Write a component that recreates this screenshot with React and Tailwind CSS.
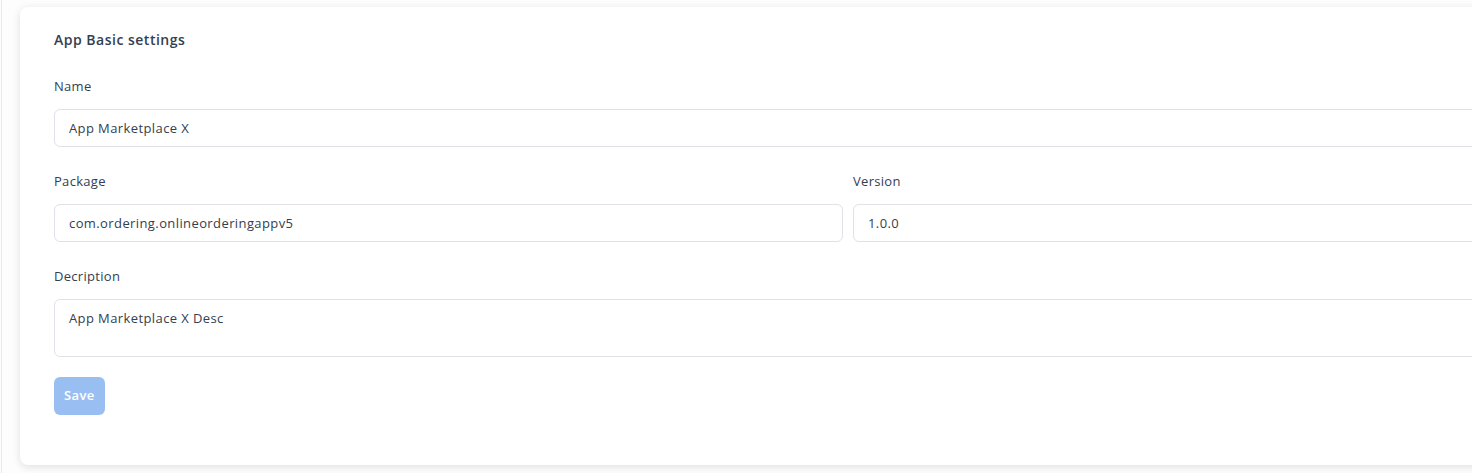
const fieldClass =
  'w-full h-[38px] rounded-md border border-[#e1e1e8] bg-white px-[14px] text-[13px] tracking-[0.4px] text-[#344050] outline-none'

function Field({ label, value }) {
  return (
    <div className="flex flex-col">
      <label className="text-[13px] tracking-[0.3px] text-[#344050] leading-5 mb-[13px]">{label}</label>
      <input className={fieldClass} defaultValue={value} />
    </div>
  )
}

export default function App() {
  return (
    <div
      className="w-[1472px] h-[473px] overflow-hidden bg-[#fdfdfd]"
      style={{ fontFamily: '"Open Sans", "Noto Sans", sans-serif' }}
    >
      <div className="h-full border-l border-[#e8e8ec] ml-px pl-[18px] pt-[7px]">
        <div className="w-[1656px] h-[458px] rounded-lg bg-white shadow-[0_2px_8px_rgba(0,0,0,0.12)] px-[34px] pt-[23px]">
          <h2 className="text-[14px] font-semibold tracking-[0.5px] text-[#344050] leading-5">App Basic settings</h2>

          <div className="mt-[26px] flex flex-col gap-[24px]">
            <Field label="Name" value="App Marketplace X" />

            <div className="grid grid-cols-2 gap-[10px]">
              <Field label="Package" value="com.ordering.onlineorderingappv5" />
              <Field label="Version" value="1.0.0" />
            </div>

            <div className="flex flex-col">
              <label className="text-[13px] tracking-[0.3px] text-[#344050] leading-5 mb-[13px]">Decription</label>
              <textarea
                className="w-full h-[58px] rounded-md border border-[#e1e1e8] bg-white px-[14px] py-[9px] text-[13px] tracking-[0.4px] text-[#344050] outline-none resize-none"
                defaultValue="App Marketplace X Desc"
              />
            </div>
          </div>

          <button
            disabled
            className="mt-[20px] h-[38px] px-[10px] rounded-md bg-[#99bff2] text-white text-[13px] font-semibold tracking-[0.4px]"
          >
            Save
          </button>
        </div>
      </div>
    </div>
  )
}
